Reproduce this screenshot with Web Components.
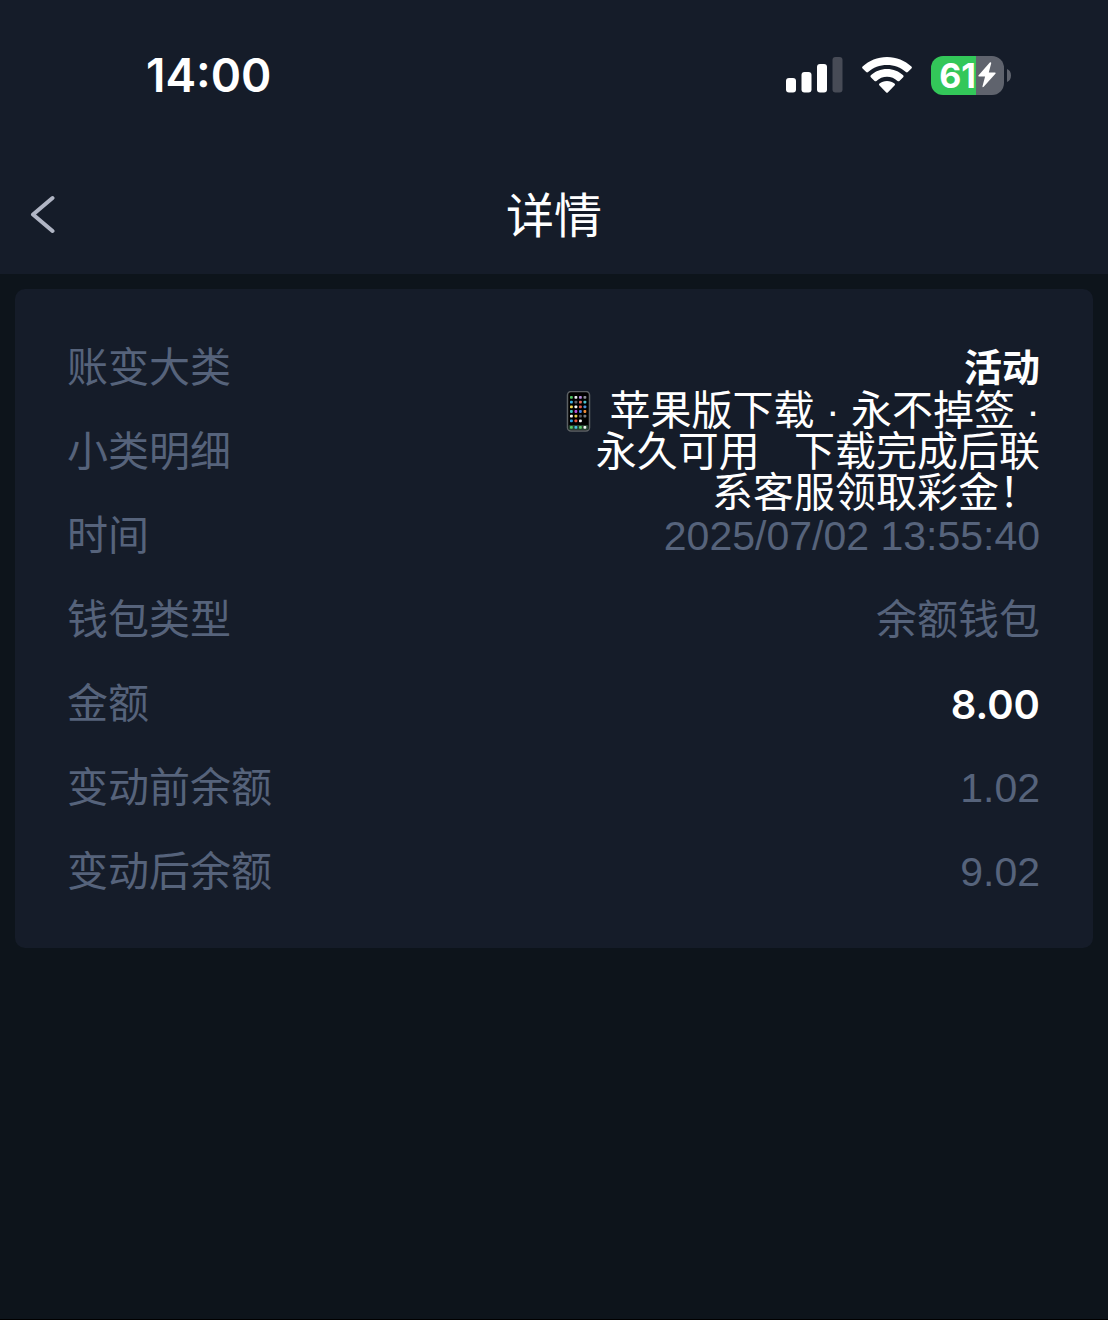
<!DOCTYPE html>
<html lang="zh-CN">
<head>
<meta charset="utf-8">
<meta name="viewport" content="width=device-width, initial-scale=1">
<title>详情</title>
<style>
  :root {
    --page: #0d141b;
    --panel: #151c29;
    --muted: #56637b;
    --bright: #ffffff;
  }
  * { box-sizing: border-box; }
  body {
    margin: 0;
    min-height: 100vh;
    background: var(--page);
    color: var(--muted);
    font-family: "Liberation Sans", "Noto Sans CJK SC", sans-serif;
    font-size: 41px;
    line-height: 41px;
    border-bottom: 1px solid #000;
  }
</style>
</head>
<body>
<status-bar time="14:00" battery="61"></status-bar>
<nav-header>详情</nav-header>
<main>
  <detail-card>
    <detail-row label="账变大类" tone="strong">活动</detail-row>
    <detail-row label="小类明细" tone="bright"><phone-icon></phone-icon> 苹果版下载 · 永不掉签 ·<br>永久可用&nbsp;&nbsp;&nbsp;下载完成后联<br>系客服领取彩金！</detail-row>
    <detail-row label="时间">2025/07/02 13:55:40</detail-row>
    <detail-row label="钱包类型">余额钱包</detail-row>
    <detail-row label="金额" tone="amount">8.00</detail-row>
    <detail-row label="变动前余额">1.02</detail-row>
    <detail-row label="变动后余额">9.02</detail-row>
  </detail-card>
</main>

<script>
class StatusBar extends HTMLElement {
  constructor() {
    super();
    this.attachShadow({ mode: 'open' });
  }

  connectedCallback() {
    const time = this.getAttribute('time');
    const battery = this.getAttribute('battery');

    this.shadowRoot.innerHTML = `
      <style>
        :host {
          display: flex; align-items: center; justify-content: space-between;
          height: 150px; padding: 0 97px 0 146px; box-sizing: border-box;
          background: var(--panel); color: #fff; font-family: Inter, sans-serif;
        }
        .time { font-size: 46px; line-height: 56px; font-weight: 600; }
        .icons { display: flex; align-items: center; gap: 19px; }
        svg { display: block; }
        .battery { display: flex; align-items: center; gap: 3px; }
        .cell {
          display: flex; align-items: center; justify-content: center; gap: 2px;
          width: 73px; height: 39px; border-radius: 12px;
          background: linear-gradient(90deg, #33c759 ${battery}%, #5f636d ${battery}%);
          font-size: 34px; line-height: 39px; font-weight: 700;
        }
      </style>
      <span class="time">${time}</span>
      <div class="icons">
        <svg width="57" height="36" viewBox="0 0 57 36" fill="#fff" aria-hidden="true">
          <rect x="0" y="21" width="10" height="14.500" rx="3"/>
          <rect x="15.500" y="15" width="10" height="20.500" rx="3"/>
          <rect x="31" y="7" width="10" height="28.500" rx="3"/>
          <rect x="46.500" y="0" width="10" height="35.500" rx="3" fill="#474b56"/>
        </svg>
        <svg width="50" height="36" viewBox="0 0 50 36" fill="#fff" aria-hidden="true">
          <path d="M25 0C15.500 0 7 3.600.600 9.500q-1 1 0 2l3.600 3.500q.900.900 1.900 0C11.200 10.600 17.700 8 25 8s13.800 2.600 18.900 7q1 .900 1.900 0l3.600-3.500q1-1 0-2C43 3.600 34.500 0 25 0z"/>
          <path d="M25 12c-6.300 0-12 2.400-16.200 6.300q-.900.900 0 1.900l3.800 3.700q.900.900 1.900 0c2.800-2.500 6.500-4.100 10.500-4.100s7.700 1.600 10.500 4.100q1 .900 1.900 0l3.800-3.700q.900-1 0-1.900C37 14.400 31.300 12 25 12z"/>
          <path d="M25 24c-2.900 0-5.500.900-7.500 2.600q-1 .900 0 1.900l6.500 6.700q1 1 2 0l6.500-6.700q1-1 0-1.900C30.500 24.900 27.900 24 25 24z"/>
        </svg>
        <div class="battery">
          <div class="cell">
            <span>${battery}</span>
            <svg width="18" height="26" viewBox="0 0 18 26" fill="#fff" aria-hidden="true">
              <path d="M11.800.600.600 13.200q-1 1.300.500 1.300h6L4.500 24.200q-.200 1.700 1.200.600L17.400 11.700q.900-1.300-.600-1.300h-6L13.200 1.200q.100-1.600-1.400-.600z"/>
            </svg>
          </div>
          <svg width="4" height="13" viewBox="0 0 4 13" fill="#5f636d" aria-hidden="true">
            <path d="M0 0c2.500.800 4 3.300 4 6.500S2.500 12.200 0 13z"/>
          </svg>
        </div>
      </div>
    `;
  }
}
customElements.define('status-bar', StatusBar);


class NavHeader extends HTMLElement {
  constructor() {
    super();
    this.attachShadow({ mode: 'open' });
    this.shadowRoot.innerHTML = `
      <style>
        :host {
          display: grid; grid-template-columns: 100px 1fr 100px; align-items: center;
          height: 124px; padding-top: 6px; box-sizing: border-box;
          background: var(--panel); color: #fff;
        }
        button {
          justify-self: start; padding: 10px 29px; border: 0;
          background: none; cursor: pointer;
        }
        svg { display: block; }
        h1 { margin: 0; padding-top: 4px; font-size: 48px; line-height: 60px; font-weight: 400; text-align: center; }
      </style>
      <button type="button" aria-label="返回">
        <svg width="26" height="40" viewBox="0 0 26 40" fill="none" stroke="#b0b5c4" stroke-width="4" stroke-linecap="round" stroke-linejoin="round" aria-hidden="true">
          <path d="M23.500 3 4 19.500 23.500 36"/>
        </svg>
      </button>
      <h1><slot></slot></h1>
    `;
  }
}
customElements.define('nav-header', NavHeader);


class DetailCard extends HTMLElement {
  constructor() {
    super();
    this.attachShadow({ mode: 'open' });
    this.shadowRoot.innerHTML = `
      <style>
        :host {
          display: flex; flex-direction: column;
          margin: 15px; padding: 37px 53px 34px 52px;
          border-radius: 10px; background: var(--panel);
        }
      </style>
      <slot></slot>
    `;
  }
}
customElements.define('detail-card', DetailCard);


class DetailRow extends HTMLElement {
  constructor() {
    super();
    this.attachShadow({ mode: 'open' });
  }

  connectedCallback() {
    // the row keeps its height, a long value runs over the row's edges
    this.shadowRoot.innerHTML = `
      <style>
        :host { display: flex; align-items: center; justify-content: space-between; height: 84px; }
        .label, .value { white-space: nowrap; }
        .value { text-align: right; }
        :host([tone]) .value { color: var(--bright); }
        :host([tone="strong"]) .value { font-size: 38px; font-weight: 700; }
        :host([tone="amount"]) .value { font-family: Inter, sans-serif; font-size: 40px; font-weight: 600; }
      </style>
      <span class="label">${this.getAttribute('label')}</span>
      <span class="value"><slot></slot></span>
    `;
  }
}
customElements.define('detail-row', DetailRow);


const appColors = [
  ['#4fc463', '#e8e8ee', '#b58ae0', '#8d9096'],
  ['#39b3e6', '#5d6068', '#e0685c', '#4cc4d0'],
  ['#f0d94f', '#f2f2f2', '#e35b4a', '#4a90d9'],
  ['#42c8c0', '#b453dc', '#3f7fe0', '#ee8b38'],
  ['#f4f4f4', '#e6c94a', '#5b5e66', '#777a80'],
  ['#2fa4ea', '#e5533f', '#f2f2f2', '#000000'],
  ['#55cc66', '#45bde0', '#5fce6a', '#f2f2f2']
];

class PhoneIcon extends HTMLElement {
  constructor() {
    super();
    this.attachShadow({ mode: 'open' });
    const apps = appColors.map((row, y) => row.map((color, x) =>
      `<rect x="${13 + x * 4.5}" y="${y === 6 ? 35 : 5 + y * 4.7}" width="2.800" height="2.800" rx=".8" fill="${color}"/>`
    ).join('')).join('');

    this.shadowRoot.innerHTML = `
      <style>
        :host { display: inline-block; vertical-align: top; }
        svg { display: block; }
      </style>
      <svg width="41" height="41" viewBox="0 0 41 41" role="img" aria-label="手机">
        <rect x="10.500" y=".5" width="22" height="39.500" rx="3.500" fill="#000" stroke="#5c6064" stroke-width="1.500"/>
        <rect x="11.500" y="34" width="20" height="5" rx="1.500" fill="#25402f"/>
        ${apps}
      </svg>
    `;
  }
}
customElements.define('phone-icon', PhoneIcon);
</script>
</body>
</html>
